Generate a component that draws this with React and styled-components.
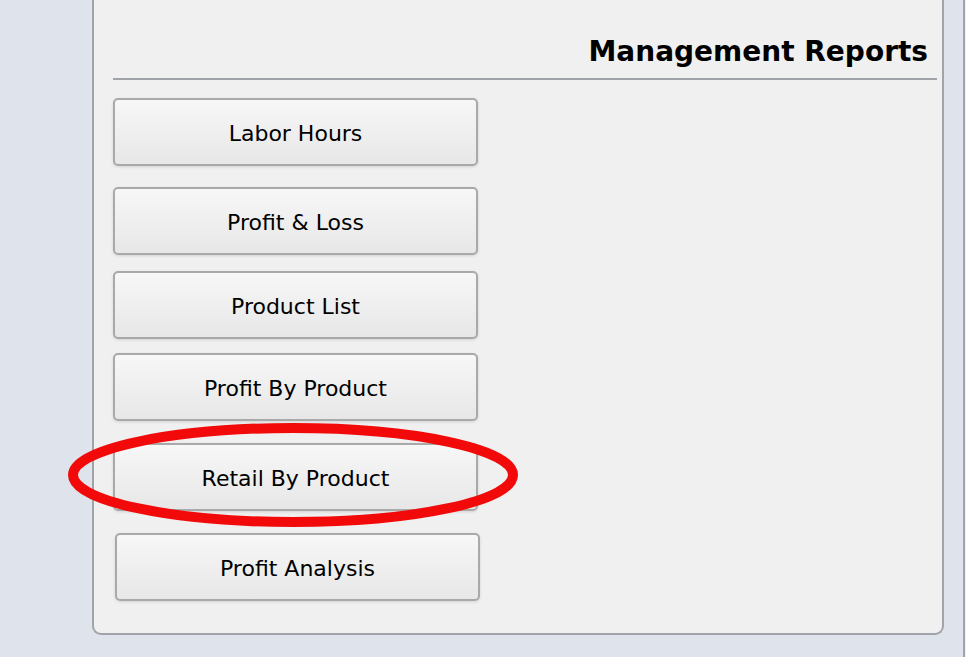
import styled, {createGlobalStyle} from "styled-components";

const GlobalStyle = createGlobalStyle`
  html, body {
    margin: 0;
    padding: 0;
    background: #dfe4ec;
    overflow: hidden;
  }
`;

const reports = [
  {label: "Labor Hours", gap: 0, shift: 0},
  {label: "Profit & Loss", gap: 21, shift: 0},
  {label: "Product List", gap: 16, shift: 0},
  {label: "Profit By Product", gap: 14, shift: 0},
  {label: "Retail By Product", gap: 22, shift: 0},
  {label: "Profit Analysis", gap: 22, shift: 2},
];

const App = () => {
  return (
    <>
      <GlobalStyle />
      <ContainerPage>
        <ContainerPanel>
          <ContainerHeader>
            <Title>Management Reports</Title>
          </ContainerHeader>
          <ContainerButtons>
            {reports.map(report => (
              <ReportButton
                key={report.label}
                $gap={report.gap}
                $shift={report.shift}
              >
                {report.label}
              </ReportButton>
            ))}
          </ContainerButtons>
          {/* red marker drawn over the highlighted report */}
          <Marker width="464" height="118" viewBox="0 0 464 118">
            <ellipse
              cx="232"
              cy="58"
              rx="220"
              ry="47"
              fill="none"
              stroke="#f20a0a"
              strokeWidth="10"
            />
          </Marker>
        </ContainerPanel>
        <ContainerSidePanel />
      </ContainerPage>
    </>
  );
};

export default App;

const ContainerPage = styled.div`
  display: flex;
  align-items: flex-start;
  gap: 19px;
  padding-left: 92px;
  height: 657px;
  box-sizing: border-box;
`;

const ContainerPanel = styled.div`
  position: relative;
  flex-shrink: 0;
  width: 852px;
  height: 635px;
  box-sizing: border-box;
  background: #f0f0f0;
  border: 2px solid #a0a4a9;
  border-top: none;
  border-radius: 0 0 9px 9px;
  padding: 0 5px 0 19px;
`;

const ContainerSidePanel = styled.div`
  flex-shrink: 0;
  width: 40px;
  height: 657px;
  background: #f0f0f0;
  border-left: 2px solid #a0a4a9;
`;

const ContainerHeader = styled.div`
  display: flex;
  justify-content: flex-end;
  height: 80px;
  padding-right: 9px;
  border-bottom: 2px solid #a0a4a9;
  box-sizing: border-box;
`;

const Title = styled.h2`
  margin: 35px 0 0;
  font-family: "DejaVu Sans", Verdana, sans-serif;
  font-weight: bold;
  font-size: 28px;
  line-height: 34px;
  color: #000;
`;

const ContainerButtons = styled.div`
  display: flex;
  flex-direction: column;
  align-items: flex-start;
  padding-top: 18px;
`;

const ReportButton = styled.button`
  width: 365px;
  height: 68px;
  margin-top: ${props => props.$gap}px;
  margin-left: ${props => props.$shift}px;
  padding: 2px 0 0;
  box-sizing: border-box;
  border: 2px solid #a9a9a9;
  border-radius: 5px;
  background: linear-gradient(#f7f7f7, #e7e7e7);
  box-shadow: 0 1px 3px rgba(0, 0, 0, 0.12);
  font-family: "DejaVu Sans", Verdana, sans-serif;
  font-size: 22px;
  color: #000;
  cursor: pointer;
`;

const Marker = styled.svg`
  position: absolute;
  left: -33px;
  top: 417px;
  pointer-events: none;
`;
